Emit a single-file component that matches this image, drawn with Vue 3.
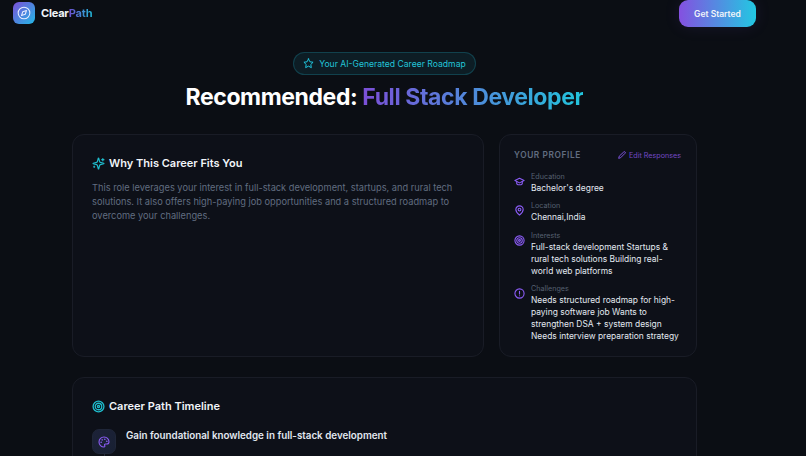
<script setup>
const profile = [
  { label: 'Education', value: "Bachelor's degree", icon: 'cap' },
  { label: 'Location', value: 'Chennai,India', icon: 'pin' },
  { label: 'Interests', value: 'Full-stack development Startups & rural tech solutions Building real-world web platforms', icon: 'target' },
  { label: 'Challenges', value: 'Needs structured roadmap for high-paying software job Wants to strengthen DSA + system design Needs interview preparation strategy', icon: 'alert' },
]
</script>

<template>
  <div class="page">
    <header class="nav">
      <div class="brand">
        <div class="logo">
          <svg viewBox="0 0 24 24" width="14" height="14" fill="none" stroke="#e6ecff" stroke-width="1.8" stroke-linecap="round" stroke-linejoin="round">
            <circle cx="12" cy="12" r="10" />
            <path d="m16.24 7.76-2.12 6.36-6.36 2.12 2.12-6.36 6.36-2.12z" />
          </svg>
        </div>
        <span class="brand-name">Clear<span class="brand-accent">Path</span></span>
      </div>
      <button class="cta">Get Started</button>
    </header>

    <main class="main">
      <section class="hero">
        <div class="pill">
          <svg viewBox="0 0 24 24" width="11" height="11" fill="none" stroke="#22d3ee" stroke-width="2" stroke-linecap="round" stroke-linejoin="round">
            <path d="M12 2l3.09 6.26L22 9.27l-5 4.87 1.18 6.88L12 17.77l-6.18 3.25L7 14.14 2 9.27l6.91-1.01L12 2z" />
          </svg>
          <span>Your AI-Generated Career Roadmap</span>
        </div>
        <h1 class="title">Recommended: <span class="grad">Full Stack Developer</span></h1>
      </section>

      <div class="grid">
        <section class="card why">
          <h2 class="card-title">
            <svg viewBox="0 0 24 24" width="13" height="13" fill="none" stroke="#1fbccc" stroke-width="2.2" stroke-linecap="round" stroke-linejoin="round">
              <path d="M9.94 15.5A2 2 0 0 0 8.5 14.06l-6.14-1.58a.5.5 0 0 1 0-.96L8.5 9.94A2 2 0 0 0 9.94 8.5l1.58-6.14a.5.5 0 0 1 .96 0L14.06 8.5A2 2 0 0 0 15.5 9.94l6.14 1.58a.5.5 0 0 1 0 .96L15.5 14.06a2 2 0 0 0-1.44 1.44l-1.58 6.14a.5.5 0 0 1-.96 0z" />
              <path d="M20 3v4M22 5h-4M4 17v2M5 18H3" />
            </svg>
            Why This Career Fits You
          </h2>
          <p class="why-text">This role leverages your interest in full-stack development, startups, and rural tech solutions. It also offers high-paying job opportunities and a structured roadmap to overcome your challenges.</p>
        </section>

        <aside class="card profile">
          <div class="profile-head">
            <span class="profile-title">YOUR PROFILE</span>
            <span class="edit">
              <svg viewBox="0 0 24 24" width="8" height="8" fill="none" stroke="#8b5cf6" stroke-width="2.6" stroke-linecap="round" stroke-linejoin="round">
                <path d="M17 3a2.85 2.83 0 1 1 4 4L7.5 20.5 2 22l1.5-5.5z" />
              </svg>
              Edit Responses
            </span>
          </div>
          <div v-for="item in profile" :key="item.label" class="row">
            <svg class="row-icon" viewBox="0 0 24 24" width="11" height="11" fill="none" stroke="#8b5cf6" stroke-width="2.4" stroke-linecap="round" stroke-linejoin="round">
              <template v-if="item.icon === 'cap'">
                <path d="M22 10 12 5 2 10l10 5 10-5z" />
                <path d="M6 12v5c3 3 9 3 12 0v-5" />
              </template>
              <template v-else-if="item.icon === 'pin'">
                <path d="M20 10c0 6-8 12-8 12s-8-6-8-12a8 8 0 0 1 16 0z" />
                <circle cx="12" cy="10" r="3" />
              </template>
              <template v-else-if="item.icon === 'target'">
                <circle cx="12" cy="12" r="10" />
                <circle cx="12" cy="12" r="6" />
                <circle cx="12" cy="12" r="2" />
              </template>
              <template v-else>
                <circle cx="12" cy="12" r="10" />
                <path d="M12 7v6M12 17h.01" />
              </template>
            </svg>
            <div class="row-body">
              <div class="row-label">{{ item.label }}</div>
              <div class="row-value">{{ item.value }}</div>
            </div>
          </div>
        </aside>
      </div>

      <section class="card timeline">
        <h2 class="card-title timeline-title">
          <svg viewBox="0 0 24 24" width="13" height="13" fill="none" stroke="#1fbccc" stroke-width="2.4" stroke-linecap="round" stroke-linejoin="round">
            <circle cx="12" cy="12" r="10" />
            <circle cx="12" cy="12" r="6" />
            <circle cx="12" cy="12" r="2" />
          </svg>
          Career Path Timeline
        </h2>
        <div class="step">
          <div class="step-col">
            <div class="step-icon">
              <svg viewBox="0 0 24 24" width="12" height="12" fill="none" stroke="#8b5cf6" stroke-width="2.2" stroke-linecap="round" stroke-linejoin="round">
                <path d="M12 22a10 10 0 1 1 10-10c0 2.5-2 4-4.5 4H15a2 2 0 0 0-1.5 3.3c.5.6.5 2.7-1.5 2.7z" />
                <circle cx="13.5" cy="6.5" r=".6" />
                <circle cx="17.5" cy="10.5" r=".6" />
                <circle cx="8.5" cy="7.5" r=".6" />
                <circle cx="6.5" cy="12.5" r=".6" />
              </svg>
            </div>
            <div class="step-line"></div>
          </div>
          <div class="step-title">Gain foundational knowledge in full-stack development</div>
        </div>
      </section>
    </main>
  </div>
</template>

<style scoped>
.page {
  width: 806px;
  height: 456px;
  overflow: hidden;
  background: #0b0e14;
  font-family: Inter, "Liberation Sans", sans-serif;
  color: #f1f5f9;
  box-sizing: border-box;
}
.nav {
  height: 31px;
  display: flex;
  align-items: flex-start;
  justify-content: space-between;
  padding: 0 50px 0 13px;
  box-sizing: border-box;
}
.brand {
  display: flex;
  align-items: center;
  gap: 6px;
  margin-top: 2px;
}
.logo {
  width: 22px;
  height: 22px;
  border-radius: 6px;
  background: linear-gradient(135deg, #7c4fd8, #22b8e6);
  display: flex;
  align-items: center;
  justify-content: center;
}
.brand-name {
  font-size: 11px;
  font-weight: 700;
  letter-spacing: -0.2px;
  color: #f1f5f9;
}
.brand-accent {
  background: linear-gradient(90deg, #6d4fd0, #22b8d8);
  -webkit-background-clip: text;
  background-clip: text;
  color: transparent;
}
.cta {
  width: 77px;
  height: 27px;
  border: 0;
  border-radius: 9px;
  background: linear-gradient(90deg, #8450e0, #22c8e2);
  color: #f1f5f9;
  font: 600 8.5px Inter, "Liberation Sans", sans-serif;
  box-shadow: 0 0 16px rgba(124, 79, 216, 0.12);
}
.main {
  width: 625px;
  margin-left: 72px;
}
.hero {
  display: flex;
  flex-direction: column;
  align-items: center;
  padding-top: 21px;
}
.pill {
  display: flex;
  align-items: center;
  gap: 5px;
  height: 23px;
  padding: 0 9px;
  border-radius: 12px;
  border: 1px solid rgba(34, 211, 238, 0.2);
  background: rgba(34, 211, 238, 0.08);
  color: #22c4d8;
  font-size: 8.6px;
  box-sizing: border-box;
}
.title {
  margin: 7px 0 0;
  font-size: 23px;
  line-height: 30px;
  font-weight: 700;
  letter-spacing: -0.4px;
  color: #fff;
}
.grad {
  background: linear-gradient(90deg, #7c4fd8, #22c4dc);
  -webkit-background-clip: text;
  background-clip: text;
  color: transparent;
}
.grid {
  display: grid;
  grid-template-columns: 412px 198px;
  gap: 15px;
  margin-top: 22px;
}
.card {
  background: #0d1018;
  border: 1px solid #191c26;
  border-radius: 12px;
  box-sizing: border-box;
}
.why {
  padding: 20px 19px;
  height: 223px;
}
.card-title {
  display: flex;
  align-items: center;
  gap: 4px;
  margin: 0;
  font-size: 11px;
  line-height: 16px;
  font-weight: 600;
  color: #f1f5f9;
}
.why-text {
  margin: 10px 0 0;
  font-size: 9.25px;
  line-height: 14px;
  color: #616d80;
}
.profile {
  padding: 15px 15px 0 14px;
  height: 223px;
}
.profile-head {
  display: flex;
  justify-content: space-between;
  align-items: center;
  margin-bottom: 11px;
}
.profile-title {
  font-size: 8.3px;
  font-weight: 600;
  letter-spacing: 0.6px;
  color: #616d80;
}
.edit {
  display: flex;
  align-items: center;
  gap: 3px;
  font-size: 7.2px;
  color: #7349c4;
}
.row {
  display: flex;
  gap: 6px;
  margin-bottom: 6.3px;
}
.row-icon {
  flex: none;
  margin-top: 5px;
}
.row-label {
  font-size: 7.2px;
  line-height: 11px;
  color: #566071;
}
.row-value {
  font-size: 8.45px;
  line-height: 12px;
  color: #e2e8f0;
}
.timeline {
  margin-top: 20px;
  padding: 20px 19px;
  height: 120px;
}
.step {
  display: flex;
  gap: 10px;
  margin-top: 15px;
}
.step-col {
  display: flex;
  flex-direction: column;
  align-items: center;
}
.step-icon {
  width: 24px;
  height: 25px;
  border-radius: 7px;
  background: linear-gradient(135deg, #1c2238, #182033);
  border: 1px solid #1f2638;
  box-sizing: border-box;
  display: flex;
  align-items: center;
  justify-content: center;
}
.step-line {
  width: 1px;
  height: 30px;
  background: #242a3a;
}
.step-title {
  font-size: 9.8px;
  line-height: 14px;
  font-weight: 600;
  color: #e2e8f0;
}
</style>
